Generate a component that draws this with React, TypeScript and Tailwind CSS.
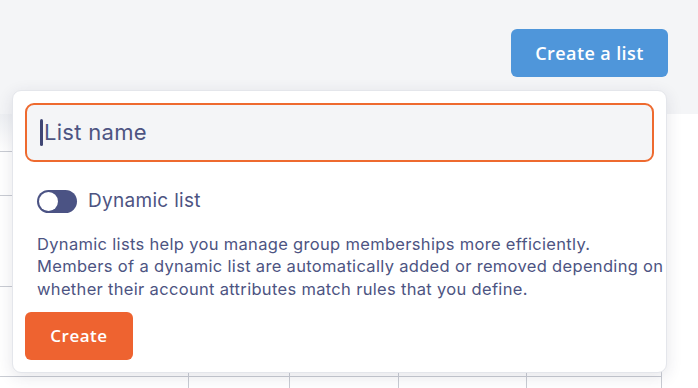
import React from 'react';

const rows = ['h-[38px]', 'h-[44px]', 'h-[91px]', 'h-[90px]', 'h-[30px]'];
const cols = ['w-[189px]', 'w-[101px]', 'w-[109px]', 'w-[128px]', 'w-[134px]'];

function Table() {
  return (
    <div className="w-[662px] border-r border-[#c9ccd3]">
      {rows.map((h, i) => (
        <div
          key={i}
          className={`flex ${h} ${i < rows.length - 1 ? 'border-b border-[#c9ccd3]' : ''} ${i === 0 ? 'bg-gradient-to-b from-[#eef0f3] to-white' : ''}`}
        >
          {cols.map((w, j) => (
            <div key={j} className={`${w} ${j < cols.length - 1 ? 'border-r border-[#c9ccd3]' : ''}`} />
          ))}
        </div>
      ))}
    </div>
  );
}

function Toggle() {
  return (
    <span className="flex h-[23px] w-[40px] shrink-0 items-center rounded-full bg-[#4b5384] px-[2px]">
      <span className="h-[19px] w-[19px] rounded-full bg-white" />
    </span>
  );
}

export default function App() {
  return (
    <div className="relative h-[388px] w-[698px] overflow-hidden bg-white font-['Inter',sans-serif]">
      <header className="flex h-[114px] items-start justify-end bg-[#f4f5f7] pr-[30px] pt-[29px]">
        <button className="h-[48px] w-[157px] rounded-[6px] bg-[#4f96da] font-['Open_Sans',sans-serif] text-[18px] font-semibold tracking-[0.4px] text-white">
          Create a list
        </button>
      </header>
      <Table />

      <div className="absolute left-[12px] top-[90px] flex h-[283px] w-[655px] flex-col rounded-[9px] border border-[#e4e6eb] bg-white p-3 shadow-[0_4px_16px_rgba(40,45,70,0.12)]">
        <div className="flex h-[59px] shrink-0 items-center rounded-[9px] border-2 border-[#ee6a2f] bg-[#f4f5f7] pl-[13px]">
          <span className="h-[27px] w-[3px] rounded-full bg-[#3f4674]" />
          <span className="ml-[1px] text-[22px] tracking-[0.3px] text-[#4d5482]">List name</span>
        </div>

        <div className="mt-[25px] flex shrink-0 items-center gap-[11px] pl-3">
          <Toggle />
          <span className="text-[19px] tracking-[0.3px] text-[#4d5482]">Dynamic list</span>
        </div>

        <p className="mt-[17px] shrink-0 whitespace-nowrap pl-3 text-[16.5px] leading-[22.5px] tracking-[0.32px] text-[#4d5482]">
          Dynamic lists help you manage group memberships more efficiently.
          <br />
          Members of a dynamic list are automatically added or removed depending on
          <br />
          whether their account attributes match rules that you define.
        </p>

        <button className="mt-auto h-[48px] w-[108px] shrink-0 rounded-[6px] bg-[#ee6330] font-['Open_Sans',sans-serif] text-[17px] font-semibold tracking-[0.5px] text-white">
          Create
        </button>
      </div>
    </div>
  );
}
